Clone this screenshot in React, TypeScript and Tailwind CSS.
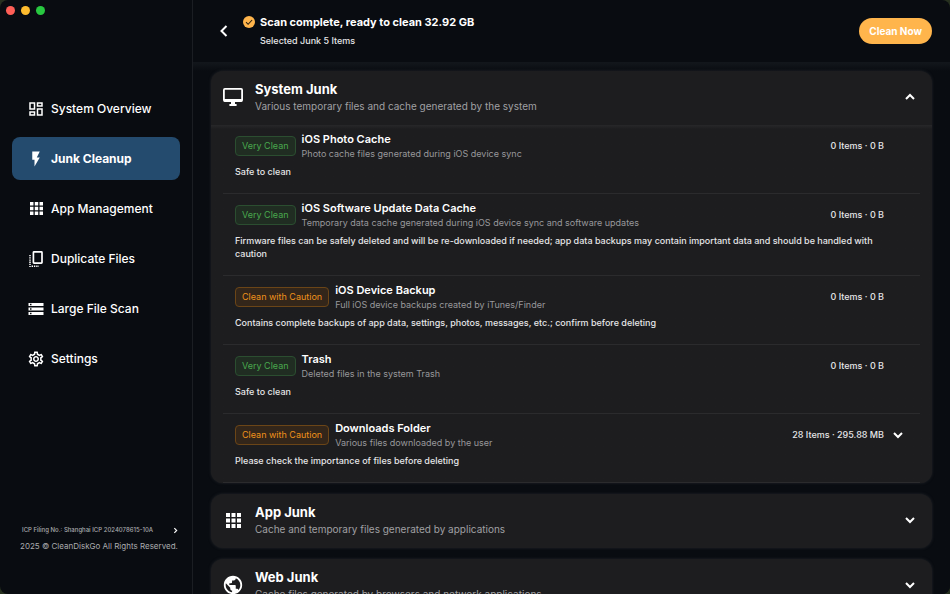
import React, { useState } from "react";
import { MdFlashOn, MdOutlineDashboard, MdOutlineSettings, MdPublic, MdStorage } from "react-icons/md";

/* ---------------------------------- Icons --------------------------------- */

const GridIcon: React.FC<{ className?: string }> = ({ className }) => (
  <svg viewBox="0 0 15 15" fill="currentColor" className={className}>
    <path d="M0 0h4v4H0zM5.5 0h4v4h-4zM11 0h4v4h-4zM0 5.5h4v4H0zM5.5 5.5h4v4h-4zM11 5.5h4v4h-4zM0 11h4v4H0zM5.5 11h4v4h-4zM11 11h4v4h-4z" />
  </svg>
);

const DuplicateIcon: React.FC = () => (
  <svg viewBox="0 0 14 16" fill="none" stroke="currentColor" strokeWidth={1.7} className="h-4 w-[14px]">
    <rect x="4.4" y="0.9" width="8.6" height="11.2" rx="0.6" />
    <path d="M1 4v12" strokeWidth={1.5} strokeDasharray="1.3 0.9" />
    <path d="M2.6 15.2h7.4" strokeWidth={1.5} strokeDasharray="1.4 0.9" />
  </svg>
);

const MonitorIcon: React.FC = () => (
  <svg viewBox="0 0 20 18" className="h-[18px] w-5">
    <rect x="0.9" y="0.9" width="18.2" height="12.2" rx="1" fill="none" stroke="currentColor" strokeWidth={1.8} />
    <path d="M1 11h18v2.6H1zM8 13h4v3h1.6v2H6.4v-2H8z" fill="currentColor" />
  </svg>
);

const CheckBadge: React.FC = () => (
  <svg viewBox="0 0 12 12" className="h-3 w-3 shrink-0">
    <circle cx="6" cy="6" r="6" fill="#ffb54c" />
    <path d="m3 6.2 2.1 2.1 4-4.3" fill="none" stroke="#2b2010" strokeWidth={1.1} />
  </svg>
);

type Direction = "up" | "down" | "left" | "right";

const CHEVRONS: Record<Direction, string> = {
  up: "M2 8l4-4 4 4",
  down: "M2 4l4 4 4-4",
  left: "M8.5 1 3.5 6l5 5",
  right: "M4 2l4 4-4 4",
};

const Chevron: React.FC<{ direction: Direction; className?: string }> = ({ direction, className }) => (
  <svg viewBox="0 0 12 12" fill="none" stroke="currentColor" strokeWidth={2} className={className}>
    <path d={CHEVRONS[direction]} />
  </svg>
);

/* ---------------------------------- Data ---------------------------------- */

interface NavItem {
  label: string;
  icon: React.ReactNode;
}

const NAV_ITEMS: NavItem[] = [
  { label: "System Overview", icon: <MdOutlineDashboard className="h-[18px] w-[18px]" /> },
  { label: "Junk Cleanup", icon: <MdFlashOn className="h-[18px] w-[18px]" /> },
  { label: "App Management", icon: <GridIcon className="h-[13px] w-[13px]" /> },
  { label: "Duplicate Files", icon: <DuplicateIcon /> },
  { label: "Large File Scan", icon: <MdStorage className="h-[18px] w-[18px]" /> },
  { label: "Settings", icon: <MdOutlineSettings className="h-[18px] w-[18px]" /> },
];

interface JunkItem {
  title: string;
  description: string;
  note: string;
  size: string;
  caution?: boolean;
  expandable?: boolean;
}

interface JunkGroup {
  title: string;
  description: string;
  icon: React.ReactNode;
  items: JunkItem[];
}

const GROUPS: JunkGroup[] = [
  {
    title: "System Junk",
    description: "Various temporary files and cache generated by the system",
    icon: <MonitorIcon />,
    items: [
      {
        title: "iOS Photo Cache",
        description: "Photo cache files generated during iOS device sync",
        note: "Safe to clean",
        size: "0 Items · 0 B",
      },
      {
        title: "iOS Software Update Data Cache",
        description: "Temporary data cache generated during iOS device sync and software updates",
        note: "Firmware files can be safely deleted and will be re-downloaded if needed; app data backups may contain important data and should be handled with caution",
        size: "0 Items · 0 B",
      },
      {
        title: "iOS Device Backup",
        description: "Full iOS device backups created by iTunes/Finder",
        note: "Contains complete backups of app data, settings, photos, messages, etc.; confirm before deleting",
        size: "0 Items · 0 B",
        caution: true,
      },
      {
        title: "Trash",
        description: "Deleted files in the system Trash",
        note: "Safe to clean",
        size: "0 Items · 0 B",
      },
      {
        title: "Downloads Folder",
        description: "Various files downloaded by the user",
        note: "Please check the importance of files before deleting",
        size: "28 Items · 295.88 MB",
        caution: true,
        expandable: true,
      },
    ],
  },
  {
    title: "App Junk",
    description: "Cache and temporary files generated by applications",
    icon: <GridIcon className="h-[15px] w-[15px]" />,
    items: [],
  },
  {
    title: "Web Junk",
    description: "Cache files generated by browsers and network applications",
    icon: <MdPublic className="h-[22px] w-[22px] shrink-0" />,
    items: [],
  },
];

/* ------------------------------- Components ------------------------------- */

const Sidebar: React.FC = () => {
  const [active, setActive] = useState("Junk Cleanup");

  return (
    <aside className="flex w-[193px] shrink-0 flex-col border-r border-[#1b1e23]">
      <div className="flex gap-[6px] px-[6px] pt-[6px]">
        <button type="button" aria-label="Close" className="h-[9px] w-[9px] rounded-full bg-[#ff5f57]" />
        <button type="button" aria-label="Minimize" className="h-[9px] w-[9px] rounded-full bg-[#febc2e]" />
        <button type="button" aria-label="Zoom" className="h-[9px] w-[9px] rounded-full bg-[#28c840]" />
      </div>

      <nav className="mt-[72px] flex flex-col gap-[7px] px-3">
        {NAV_ITEMS.map((item) => (
          <button
            key={item.label}
            type="button"
            onClick={() => setActive(item.label)}
            className={`flex h-[43px] items-center gap-[5px] rounded-lg pl-[14px] text-left text-[12px] text-white ${
              active === item.label ? "bg-[#244b6e] font-bold" : "font-medium"
            }`}
          >
            <span className="flex w-5 justify-center">{item.icon}</span>
            {item.label}
          </button>
        ))}
      </nav>

      <footer className="mt-auto pr-3 pb-10 pl-5 whitespace-nowrap text-[#a9abae]">
        <a href="#icp" className="flex items-center justify-between pl-[2px] text-[6px] leading-4 font-medium">
          ICP Filing No.: Shanghai ICP 2024078615-10A
          <Chevron direction="right" className="mr-px h-[7px] w-[7px] text-white" />
        </a>
        <p className="text-[8px] leading-4">2025 © CleanDiskGo All Rights Reserved.</p>
      </footer>
    </aside>
  );
};

const JunkRow: React.FC<{ item: JunkItem }> = ({ item }) => (
  <li className="mx-3 border-b border-[#2b2b2d] px-3 pt-[6px] pb-[15px]">
    <div className="flex items-center">
      <span
        className={`mr-[6px] rounded border px-[6px] text-[9px] leading-[18px] ${
          item.caution ? "border-[#6b4517] bg-[#33261a] text-[#f0921b]" : "border-[#2b4e30] bg-[#202d22] text-[#49a94e]"
        }`}
      >
        {item.caution ? "Clean with Caution" : "Very Clean"}
      </span>
      <div className="min-w-0 flex-1">
        <h3 className="text-[11px] leading-4 font-semibold text-white">{item.title}</h3>
        <p className="text-[9px] leading-[14px] text-[#98989b]">{item.description}</p>
      </div>
      <span className="text-[9px] font-medium text-[#e6e6e8]">{item.size}</span>
      {item.expandable ? (
        <button type="button" aria-label={`Show ${item.title}`} className="ml-2 text-white">
          <Chevron direction="down" className="mr-1 h-3 w-3" />
        </button>
      ) : (
        <span className="w-6" />
      )}
    </div>
    <p className="mt-1 pr-6 text-[9px] leading-[13px] font-medium text-[#e6e6e8]">{item.note}</p>
  </li>
);

const JunkCard: React.FC<{ group: JunkGroup }> = ({ group }) => {
  const [open, setOpen] = useState(group.items.length > 0);

  return (
    <section className="rounded-xl bg-[#1d1d1f] shadow-[0_0_3px_#25272b]">
      <button
        type="button"
        aria-expanded={open}
        onClick={() => setOpen(!open)}
        className="flex h-[54px] w-full items-center pr-4 pb-[2px] pl-3 text-left"
      >
        <span className="flex w-5 justify-center text-white">{group.icon}</span>
        <span className="ml-3 flex-1">
          <span className="block text-[13px] leading-[18px] font-bold text-white">{group.title}</span>
          <span className="block text-[10px] leading-4 text-[#a0a0a3]">{group.description}</span>
        </span>
        <Chevron direction={open ? "up" : "down"} className="h-3 w-3 text-white" />
      </button>
      {open && group.items.length > 0 && (
        <ul className="rounded-b-xl bg-linear-to-b from-[#272729] to-[#1d1d1f] to-[4px]">
          {group.items.map((item) => (
            <JunkRow key={item.title} item={item} />
          ))}
        </ul>
      )}
    </section>
  );
};

const App: React.FC = () => (
  <div className="h-screen bg-[#26301f]">
    <div className="flex h-full overflow-hidden rounded-lg bg-[#090c11] font-[Inter,sans-serif]">
      <Sidebar />
      <main className="flex min-w-0 flex-1 flex-col">
        <header className="flex h-[62px] shrink-0 items-center pr-[18px] pl-6">
          <button type="button" aria-label="Back" className="text-white">
            <Chevron direction="left" className="h-3 w-[14px]" />
          </button>
          <div className="ml-3 flex-1">
            <div className="flex items-center gap-[5px]">
              <CheckBadge />
              <h1 className="text-[11px] leading-5 font-bold text-white">Scan complete, ready to clean 32.92 GB</h1>
            </div>
            <p className="pl-[17px] text-[9px] leading-[18px] font-medium text-[#e6e6e8]">Selected Junk 5 Items</p>
          </div>
          <button type="button" className="h-[26px] rounded-full bg-[#ffb54c] px-[10px] text-[10px] font-bold text-white">
            Clean Now
          </button>
        </header>
        <div className="flex flex-1 flex-col gap-[11px] overflow-hidden border-t border-[#12161b] bg-linear-to-b from-[#12161b] to-[#090c11] to-[8px] px-[18px] pt-2">
          {GROUPS.map((group) => (
            <JunkCard key={group.title} group={group} />
          ))}
        </div>
      </main>
    </div>
  </div>
);

export default App;
